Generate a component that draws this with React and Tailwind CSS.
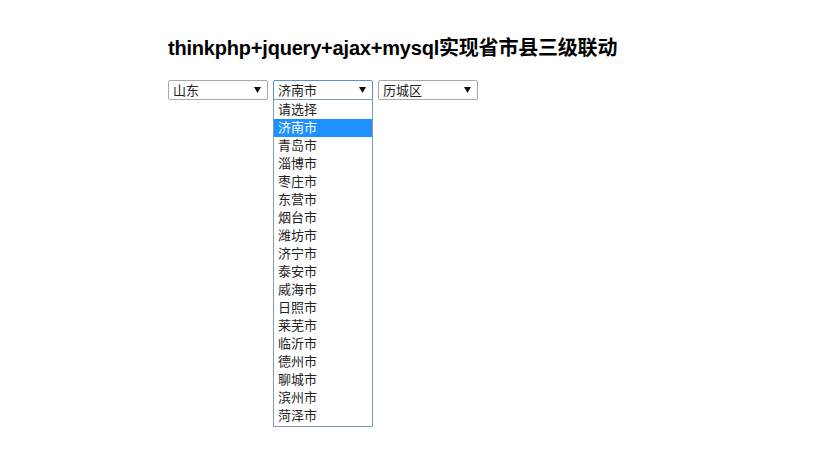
import React from 'react';

const cities = [
  '请选择', '济南市', '青岛市', '淄博市', '枣庄市', '东营市', '烟台市', '潍坊市', '济宁市',
  '泰安市', '威海市', '日照市', '莱芜市', '临沂市', '德州市', '聊城市', '滨州市', '菏泽市',
];

const Arrow = () => (
  <svg width="7" height="6" viewBox="0 0 7 6" className="shrink-0">
    <path d="M0 0 H7 L3.5 6 Z" fill="#111" />
  </svg>
);

const FakeSelect = ({ value, focused, children }) => (
  <div className="relative">
    <div
      className={`w-[100px] h-[20px] flex items-center justify-between pl-[4px] pr-[6px] rounded-[2px] bg-white border ${
        focused ? 'border-[#5b8fd6]' : 'border-[#a9a9a9]'
      }`}
    >
      <span className="text-[13px] leading-none text-[#222]">{value}</span>
      <Arrow />
    </div>
    {children}
  </div>
);

export default function App() {
  return (
    <div
      className="w-[816px] h-[470px] bg-white pl-[168px] pt-[34px]"
      style={{ fontFamily: '"Liberation Sans", "Noto Sans CJK SC", sans-serif' }}
    >
      <h1 className="text-[20px] font-bold leading-[28px] text-black tracking-[-0.2px]">
        thinkphp+jquery+ajax+mysql实现省市县三级联动
      </h1>

      <div className="flex gap-[5px] mt-[18px]">
        <FakeSelect value="山东" />
        <FakeSelect value="济南市" focused>
          <ul className="absolute left-0 top-[19px] w-[100px] bg-white border border-[#7f9db9] py-[1px]">
            {cities.map((c) => (
              <li
                key={c}
                className={`h-[18px] leading-[18px] pl-[4px] text-[13px] ${
                  c === '济南市' ? 'bg-[#1e90ff] text-white' : 'text-[#222]'
                }`}
              >
                {c}
              </li>
            ))}
          </ul>
        </FakeSelect>
        <FakeSelect value="历城区" />
      </div>
    </div>
  );
}
